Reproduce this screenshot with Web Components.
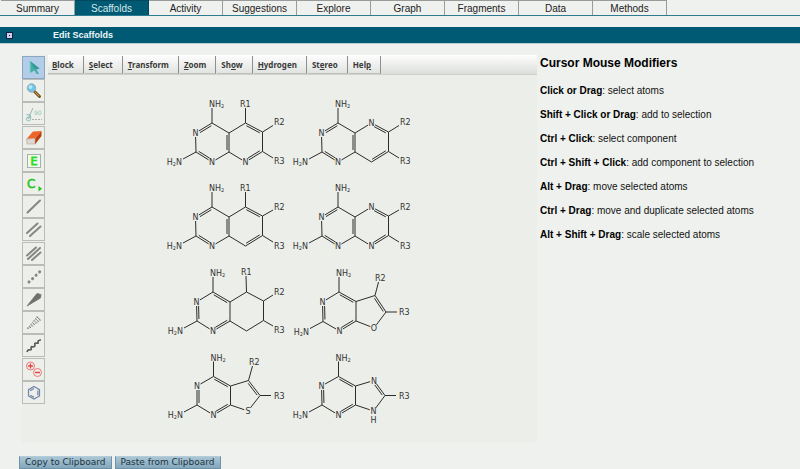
<!DOCTYPE html>
<html lang="en">
<head>
<meta charset="utf-8">
<title>Edit Scaffolds</title>
<style>
  html { background: #eff1ee; }
  body { margin: 0; font-family: "Liberation Sans", Arial, sans-serif; font-size: 10px; color: #111; }
</style>
</head>
<body>
<scaffold-app></scaffold-app>
<script>
const define = (name, html, setup) => customElements.define(name, class extends HTMLElement {
  connectedCallback() {
    if (this.shadowRoot) return;
    const root = this.attachShadow({ mode: 'open' });
    const t = document.createElement('template');
    t.innerHTML = html;
    root.append(t.content.cloneNode(true));
    if (setup) setup(this, root);
  }
});

define('nav-tab', `
<style>
  :host { display: block; width: 74px; }
  a { display: block; box-sizing: border-box; height: 15px; line-height: 15px; text-align: center; color: #222;
      text-decoration: none; border-top: 1px solid #999c9a; border-right: 1px solid #999c9a; }
  :host([active]) a { background: #005a73; color: #d9e8ec; border-color: #00495e; }
</style>
<a href="#"><slot></slot></a>`);

define('section-bar', `
<style>
  :host { display: flex; align-items: center; height: 16px; background: #005a73; border-bottom: 1px solid #b9cfd6; padding-left: 6px; }
  button { box-sizing: border-box; width: 7px; height: 7px; padding: 0; border: 1px solid #16203a; background: #cfcff6;
    display: grid; place-items: center; }
  button::before { content: ""; width: 1px; height: 1px; background: #111; }
  h1 { margin: 0 0 0 40px; font-size: 9px; line-height: 16px; color: #eef6f8; }
</style>
<button aria-label="Collapse section"></button><h1><slot></slot></h1>`);

const icons = {
  cursor: ['Select', '<path d="M8 5L17.500 12.500L14.500 13.500L17 18L14.500 18L12.500 14.500L8 17Z" fill="#48ada8"/><path d="M8 5L17.500 12.500L12.500 13Z" fill="#329a96"/><path d="M8 5V17" stroke="#83cfc9"/>'],
  zoom: ['Zoom', '<path d="M12.500 12.500L17.500 17.500" stroke="#7b5424" stroke-width="3" stroke-linecap="round"/><path d="M13 13L17 17" stroke="#d6a04a"/><circle cx="9.500" cy="9" r="4.200" fill="#6cc6ea" stroke="#9aa8b0"/><circle cx="8.500" cy="8" r="2" fill="#b4e6f8"/>'],
  angle: ['Clean geometry', '<path d="M6 17L11 6" stroke="#aab0ae"/><path d="M4.500 12.500L8 13L9 16" stroke="#82bcb8" fill="none"/><circle cx="6.500" cy="17" r="2" fill="none" stroke="#87c0bd"/><path d="M10 17.500H20" stroke="#aab0ae" stroke-dasharray="2 1"/><text x="12" y="12.500" font-size="6" fill="#8fc7bc">90</text>'],
  eraser: ['Erase', '<path d="M4.500 13L11 5.500L19.500 5L13 12.500Z" fill="#ef6427"/><path d="M19.500 5V10L13 18.500V12.500Z" fill="#b8400c"/><path d="M4.500 13L13 12.500V18L5 18Z" fill="#ded7d3" stroke="#b7a39b" stroke-width=".6"/>'],
  element: ['Element', '<rect x="5.500" y="5.500" width="13" height="13" fill="#f3f6f1" stroke="#a3b5a2"/><text x="8.500" y="16" font-size="11" fill="#28e01c" stroke="#28e01c" stroke-width=".8">E</text>'],
  carbon: ['Carbon', '<text x="5" y="16" font-size="12" fill="#1fc41b" stroke="#1fc41b" stroke-width=".5">C</text><path d="M16.500 14V19.500L20 16.700Z" fill="#1fc41b"/>'],
  single: ['Single bond', '<path d="M5.500 17.500L18 5.500" stroke="#858785" stroke-width="2" stroke-linecap="round"/>'],
  double: ['Double bond', '<path d="M5 15L15.500 5.500M8 18L18.500 8.500" stroke="#858785" stroke-width="2" stroke-linecap="round"/>'],
  triple: ['Triple bond', '<path d="M5 13.500L14 5.500M6 17L18 6M10 18L18.500 10.500" stroke="#858785" stroke-width="2" stroke-linecap="round"/>'],
  dotted: ['Any bond', '<path d="M7 17L18 6.500" stroke="#858785" stroke-width="3" stroke-linecap="round" stroke-dasharray=".1 4.800"/>'],
  wedge: ['Wedge bond', '<path d="M5 18L15 5.500L19 6.500L18.500 10Z" fill="#6e706e" stroke="#7c7e7c" stroke-linejoin="round"/>'],
  hash: ['Hash bond', '<path d="M14.500 5.500L18.500 9.500M13 7.300L17 11M11.500 9L15 12.500M10 11L13 14M8.500 13L11 15.500M7 15L9 17M5.500 16.500L7 18" stroke="#838583"/><path d="M5 18L15.500 5.500L18.500 9Z" fill="none" stroke="#a3a5a2" stroke-width=".6"/>'],
  wavy: ['Wavy bond', '<path d="M5 18Q6 15 8 16Q10 16 9 14Q9 12 11 13Q13 13 13 11Q12 9 14 9Q17 10 16 8Q16 6 19 6" fill="none" stroke="#555755" stroke-width="1.600"/>'],
  charge: ['Charge', '<g fill="none" stroke="#ee7776"><circle cx="8.500" cy="8" r="4"/><circle cx="15.500" cy="14.500" r="4"/></g><path d="M6 8H11M8.500 5.500V10.500M13 14.500H18" stroke="#e04845" stroke-width="1.300"/>'],
  ring: ['Benzene ring', '<path d="M12 5.500L17.500 8.700V15L12 18L6.500 15V8.700ZM8.200 9.700L12 7.500M15.800 9.500V14.300M8.300 14.200L12 16.200" fill="none" stroke="#7184aa" stroke-width="1.200"/>']
};

define('tool-button', `
<style>
  :host { display: block; }
  button { display: block; box-sizing: border-box; width: 23px; height: 23px; padding: 0; border: 1px solid #b9bcb8; background: #edefea; }
  :host([active]) button { background: #b3cde8; border-color: #8ca6bf; }
  svg { display: block; margin: -1px; font-family: "DejaVu Sans", sans-serif; }
</style>
<button><svg width="23" height="23" viewBox="0 0 23 23"></svg></button>`, (host, root) => {
  const [label, art] = icons[host.getAttribute('icon')];
  root.querySelector('button').setAttribute('aria-label', label);
  root.querySelector('svg').innerHTML = art;
});

define('menu-item', `
<style>
  :host { display: block; }
  button { box-sizing: border-box; height: 18px; padding: 0 9px 0 4px; border: 0; border-right: 1px solid #8e908e; border-bottom: 1px solid #bfc1bf;
    background: linear-gradient(#fbfcfb, #e2e4e1); font: bold 8px/17px "Noto Sans", "Open Sans", sans-serif; color: #3a3a3a; display: block; }
</style>
<button><slot></slot></button>`);

define('action-button', `
<style>
  :host { display: block; }
  button { display: block; box-sizing: border-box; height: 13px; padding: 0 5px; border: 1px solid #6e93a8; border-top-color: #b3ccd8;
    background: linear-gradient(#a9c6d6, #82a7bc); font: 9px/11px "DejaVu Sans", Verdana, sans-serif; color: #22323c; }
</style>
<button><slot></slot></button>`);

/* Structures in sheet coordinates. The first six atoms are the pyrimidine ring:
   C4, N3, C2, N1, C8a, C4a; the rest close the second ring from C4a back to C8a. */
const outer = [[0, 1], [2, 3], [4, 5]];
const inner = [[0, 5], [1, 2], [3, 4]];
const six = (dx, dy) => [[212, 123], [195.5, 133], [196, 152], [212, 162], [229, 152], [229, 133], [245.5, 123], [262.5, 132], [262.5, 151.5], [245.5, 162]].map(([x, y]) => [x + dx, y + dy]);
const structures = [
  { atoms: six(0, 0), hetero: { 9: 'N' }, double: [...outer, [6, 7], [8, 9]], r: [[6, 245.5, 108, 'R1', 240, 107], [7, 273, 125.5, 'R2', 274, 125], [8, 273, 158, 'R3', 274, 164]] },
  { atoms: six(126, 0), hetero: { 6: 'N' }, double: [...outer, [6, 7], [8, 9]], r: [[7, 399, 125.5, 'R2', 400, 125], [8, 399, 158, 'R3', 400, 164]] },
  { atoms: six(0, 84), hetero: {}, double: [...outer, [6, 7], [8, 9]], r: [[6, 245.5, 192, 'R1', 240, 191], [7, 273, 210, 'R2', 274, 210], [8, 273, 242, 'R3', 274, 249]] },
  { atoms: six(126, 84), hetero: { 6: 'N', 9: 'N' }, double: [...outer, [6, 7], [8, 9]], r: [[7, 399, 210, 'R2', 400, 210], [8, 399, 242, 'R3', 400, 249]] },
  { atoms: six(1, 169), hetero: {}, double: inner, r: [[6, 246, 276, 'R1', 241, 275], [7, 273, 295, 'R2', 274, 295], [8, 273, 326, 'R3', 274, 333]] },
  { atoms: [[339, 292], [322.5, 302], [323, 321.5], [339.5, 331], [356, 321], [356, 301.5], [375, 295.5], [386, 312], [374, 328]], hetero: { 8: 'O' }, double: [...inner, [6, 7]], r: [[6, 378.5, 282, 'R2', 375, 281], [7, 397, 312, 'R3', 399, 315]] },
  { atoms: [[213.5, 376.5], [197, 386], [197, 405], [213.5, 415], [230.5, 405], [230.5, 386], [248.5, 380.5], [260, 395.5], [248, 411]], hetero: { 8: 'S' }, double: [...inner, [6, 7]], r: [[6, 252.5, 366, 'R2', 249, 365], [7, 271, 395.5, 'R3', 274, 399]] },
  { atoms: [[338.5, 376.5], [321.5, 386], [322, 405], [338.5, 415], [355.5, 405], [355.5, 386], [374, 380.5], [385, 395.5], [373.5, 411]], hetero: { 6: 'N', 8: 'N' }, hydrogen: [373.5, 423], double: [...inner, [6, 7]], r: [[7, 396, 395.5, 'R3', 399, 399]] }
];

define('mol-structure', `
<style>
  :host { display: block; }
  svg { display: block; font: 8px "DejaVu Sans", sans-serif; fill: #333; }
  path { stroke: #2c2c2c; stroke-width: 1; fill: none; }
</style>
<svg width="126" height="84" role="img"></svg>`, (host, root) => {
  const i = +host.getAttribute('index'), m = structures[i], a = m.atoms;
  const labels = { 1: 'N', 3: 'N', ...m.hetero };
  const centre = ids => ids.reduce((s, k) => [s[0] + a[k][0] / ids.length, s[1] + a[k][1] / ids.length], [0, 0]);
  const rings = [[0, 1, 2, 3, 4, 5], [4, 5, ...a.keys()].filter((k, n) => n < 2 || k > 5)];
  const bonds = [[0, 1], [1, 2], [2, 3], [3, 4], [4, 5], [5, 0]];
  for (let k = 5; k < a.length - 1; k++) bonds.push([k, k + 1]);
  bonds.push([a.length - 1, 4]);
  let d = '', text = '';
  const seg = (p, q, cutP, cutQ) => {
    const L = Math.hypot(q[0] - p[0], q[1] - p[1]), u = [(q[0] - p[0]) / L, (q[1] - p[1]) / L];
    d += `M${p[0] + u[0] * cutP} ${p[1] + u[1] * cutP}L${q[0] - u[0] * cutQ} ${q[1] - u[1] * cutQ}`;
  };
  for (const [p, q] of bonds) {
    seg(a[p], a[q], labels[p] ? 4 : 0, labels[q] ? 4 : 0);
    if (m.double.some(b => b.includes(p) && b.includes(q))) {
      const c = centre(rings.find(r => r.includes(p) && r.includes(q)));
      const L = Math.hypot(a[q][0] - a[p][0], a[q][1] - a[p][1]);
      let n = [-(a[q][1] - a[p][1]) / L * 2, (a[q][0] - a[p][0]) / L * 2];
      if (n[0] * (c[0] - a[p][0]) + n[1] * (c[1] - a[p][1]) < 0) n = [-n[0], -n[1]];
      const off = k => [a[k][0] + n[0], a[k][1] + n[1]];
      seg(off(p), off(q), labels[p] ? 4 : 2, labels[q] ? 4 : 2);
    }
  }
  const put = (x, y, s, anchor) => text += `<text x="${x}" y="${y}" text-anchor="${anchor || 'start'}">${s}</text>`;
  for (const k in labels) put(a[k][0], a[k][1] + 3, labels[k], 'middle');
  const sub = '<tspan font-size="5" dy="1">2</tspan>';
  seg(a[0], [a[0][0], a[0][1] - 15], 0, 0);
  put(a[0][0] - 3, a[0][1] - 16, 'NH' + sub);
  seg(a[2], [a[2][0] - 13, a[2][1] + 7], 0, 0);
  put(a[2][0] - 14, a[2][1] + 13, 'H' + sub + '<tspan dy="-1">N</tspan>', 'end');
  for (const [k, x, y, s, tx, ty] of m.r) { seg(a[k], [x, y], 0, 0); put(tx, ty, s); }
  if (m.hydrogen) put(...m.hydrogen, 'H', 'middle');
  const svg = root.querySelector('svg');
  svg.setAttribute('viewBox', `${165 + i % 2 * 126} ${97 + (i >> 1) * 84} 126 84`);
  svg.setAttribute('aria-label', 'Scaffold ' + (i + 1));
  svg.innerHTML = `<path d="${d}"/>${text}`;
});

define('molecule-editor', `
<style>
  :host { display: flex; box-sizing: border-box; gap: 3px; flex: 0 1 515px; background: #eceee9; }
  .tools { display: flex; flex-direction: column; justify-content: space-between; height: 348px; padding-top: 1px; }
  .main { flex: 1; min-width: 0; padding-bottom: 10px; }
  .menu { display: flex; gap: 1px; height: 20px; align-items: center; box-sizing: border-box; background: linear-gradient(#fdfefd, #dcdeda); border-bottom: 1px solid #d0d2ce; }
  .sheet { display: grid; grid-template-columns: 126px 126px; justify-content: start; padding: 22px 0 0 117px; }
</style>
<div class="tools" role="toolbar" aria-label="Drawing tools">${Object.keys(icons).map((k, i) => `<tool-button icon="${k}"${i ? '' : ' active'}></tool-button>`).join('')}</div>
<div class="main">
  <div class="menu">${['<u>B</u>lock', '<u>S</u>elect', '<u>T</u>ransform', '<u>Z</u>oom', 'Sh<u>o</u>w', '<u>H</u>ydrogen', 'St<u>e</u>reo', 'Hel<u>p</u>'].map(s => `<menu-item>${s}</menu-item>`).join('')}</div>
  <div class="sheet">${structures.map((_, i) => `<mol-structure index="${i}"></mol-structure>`).join('')}</div>
</div>`);

define('help-panel', `
<style>
  :host { display: block; flex: 1; min-width: 0; }
  h2 { margin: 0 0 14px; font-size: 12px; line-height: 16px; color: #000; }
  p { margin: 0 0 12px; line-height: 12px; }
  b { color: #000; }
</style>
<h2>Cursor Mouse Modifiers</h2>
${[['Click or Drag', 'select atoms'], ['Shift + Click or Drag', 'add to selection'], ['Ctrl + Click', 'select component'], ['Ctrl + Shift + Click', 'add component to selection'], ['Alt + Drag', 'move selected atoms'], ['Ctrl + Drag', 'move and duplicate selected atoms'], ['Alt + Shift + Drag', 'scale selected atoms']].map(([k, v]) => `<p><b>${k}</b>: ${v}</p>`).join('')}`);

define('scaffold-app', `
<style>
  :host { display: block; }
  nav { display: flex; padding-left: 1px; border-bottom: 1px solid #2d7d92; margin-bottom: 11px; }
  main { display: flex; gap: 3px; padding: 11px 0 0 22px; }
  footer { display: flex; gap: 3px; padding: 13px 0 0 19px; }
</style>
<nav>${['Summary', 'Scaffolds', 'Activity', 'Suggestions', 'Explore', 'Graph', 'Fragments', 'Data', 'Methods'].map((s, i) => `<nav-tab${i === 1 ? ' active' : ''}>${s}</nav-tab>`).join('')}</nav>
<section-bar>Edit Scaffolds</section-bar>
<main><molecule-editor></molecule-editor><help-panel></help-panel></main>
<footer><action-button>Copy to Clipboard</action-button><action-button>Paste from Clipboard</action-button></footer>`);
</script>
</body>
</html>
